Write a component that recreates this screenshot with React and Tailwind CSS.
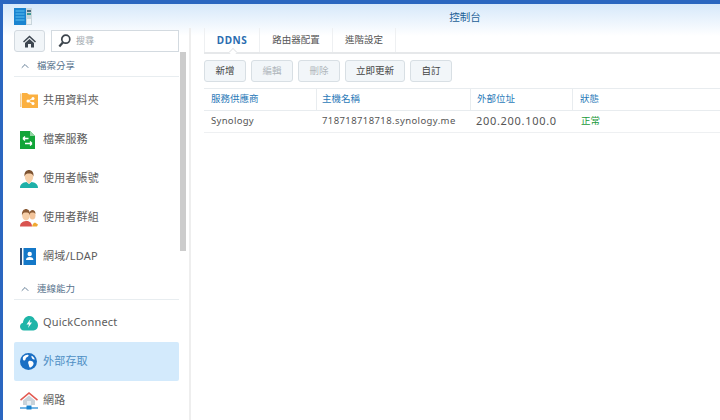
import { ChevronUp } from 'lucide-react'

const FONT = "font-['Noto_Sans','Noto_Sans_CJK_TC',sans-serif]"

function LogoIcon() {
  return (
    <svg width="19" height="17" viewBox="0 0 19 17">
      <rect x="0" y="0" width="12" height="17" fill="#1a84d0" />
      <path d="M1.5 3h9M1.5 6h9M1.5 9h9M1.5 12h9" stroke="#5cc0f0" strokeWidth="1" />
      <rect x="12" y="0" width="6" height="17" fill="#c9d6dc" />
      <rect x="13" y="2" width="4" height="2" fill="#4c6c80" />
      <rect x="13" y="5" width="4" height="2" fill="#3f9a94" />
      <rect x="13" y="11" width="4" height="5" fill="#eef3f5" />
    </svg>
  )
}

function HomeIcon() {
  return (
    <svg width="13" height="13" viewBox="0 0 13 13">
      <path d="M6.5.5 0 6.6l1 1 5.5-5 5.5 5 1-1z" fill="#3d4650" />
      <path d="M2 8 6.500 3.900 11 8v4.500H8V9H5v3.500H2z" fill="#3d4650" />
    </svg>
  )
}

function SearchIcon() {
  return (
    <svg width="13" height="14" viewBox="0 0 13 14" fill="none">
      <circle cx="7.800" cy="5.200" r="4" stroke="#3c444c" strokeWidth="1.700" />
      <path d="M4.800 8.500 1.300 12.500" stroke="#3c444c" strokeWidth="2.200" />
    </svg>
  )
}

function FolderIcon() {
  return (
    <svg width="18" height="17" viewBox="0 0 18 17">
      <path d="M0 1.500h1.500V15H0z" fill="#f6cf94" />
      <path d="M2 1h5l2 1.500h9V16H2z" fill="#fbb040" />
      <circle cx="8" cy="9" r="1.500" fill="#fff" />
      <circle cx="13" cy="6.500" r="1.500" fill="#fff" />
      <circle cx="13" cy="11.500" r="1.500" fill="#fff" />
      <path d="M8 9l5-2.500M8 9l5 2.500" stroke="#fff" strokeWidth="1" />
    </svg>
  )
}

function FileIcon() {
  return (
    <svg width="15" height="18" viewBox="0 0 15 18">
      <path d="M0 0h10l5 5v13H0z" fill="#12a538" />
      <path d="M10 0v5h5z" fill="#8fd6a2" />
      <path d="M3 7.500h5.500M3 7.500l2-2M3 7.500l2 2M5 12.500h7M12 12.500l-2-2M12 12.500l-2 2" stroke="#fff" strokeWidth="1.400" fill="none" />
    </svg>
  )
}

function UserIcon() {
  return (
    <svg width="18" height="18" viewBox="0 0 18 18">
      <path d="M0 18c0-4 3-5.500 6.500-6l2.500 2 2.500-2c3.500.5 6.500 2 6.500 6z" fill="#1fb0a8" />
      <ellipse cx="9" cy="6.500" rx="4.200" ry="5.500" fill="#f6cfa8" />
      <path d="M4.500 6.500C4 2 6.500 0 9 0s5 2 4.500 6.500C13 4 11 3.500 9 3.500S5 4 4.500 6.500z" fill="#7c5230" />
      <path d="M6.500 11.500 9 14l2.500-2.500-1-1h-3z" fill="#f6cfa8" />
    </svg>
  )
}

function GroupIcon() {
  return (
    <svg width="18" height="18" viewBox="0 0 18 18">
      <ellipse cx="12.500" cy="6.500" rx="3" ry="4" fill="#f3c49a" />
      <path d="M9.500 5c0-3 1.500-4 3-4s3 1 3 4c-1-1.500-2-1.500-3-1.500S10.500 3.500 9.500 5z" fill="#8a5a34" />
      <path d="M0 17.500c0-3.500 2.500-5 6-5.500s6 2 6 5.500z" fill="#d9534f" />
      <ellipse cx="6" cy="6.500" rx="3.800" ry="5" fill="#f6cfa8" />
      <path d="M2 6.500C1.500 2 4 0 6 0s4.500 2 4 6.500C9.500 4 8 3.500 6 3.500S2.500 4 2 6.500z" fill="#8a5a34" />
      <path d="M12 17.500c.5-2.500 1.500-3.500 3-4l3 2-1 2z" fill="#f0a830" />
    </svg>
  )
}

function DomainIcon() {
  return (
    <svg width="16" height="17" viewBox="0 0 16 17">
      <rect x="0" y="0" width="2" height="17" fill="#2f4f78" />
      <rect x="3.500" y="0" width="12.500" height="17" fill="#1478c8" />
      <circle cx="9.700" cy="6" r="2.200" fill="#fff" />
      <path d="M6 12c0-2 1.500-3 3.700-3s3.700 1 3.700 3z" fill="#fff" />
    </svg>
  )
}

function CloudIcon() {
  return (
    <svg width="18" height="16" viewBox="0 0 18 16">
      <path d="M4 15.500C1.500 15.500 0 13.800 0 11.500 0 9.500 1.300 8 3 7.700 3.300 3.500 6.300 1 9.300 1c2.700 0 4.700 1.500 5.500 4 1.900.6 3.200 2.800 3.200 5.300 0 3-2 5.200-4.500 5.200z" fill="#1fb5a8" />
      <path d="M10.500 4 6.500 9.500h2.500L8 13l4-5.500H9.500z" fill="#fff" />
    </svg>
  )
}

function GlobeIcon() {
  return (
    <svg width="17" height="17" viewBox="0 0 17 17">
      <circle cx="8.500" cy="8.500" r="8.500" fill="#1a6fc4" />
      <path d="M3 4c2-2 4-2.500 5.500-2 .5 1-1 2-2 2.500S6 7 4.500 7.500 2.500 6 3 4zM9 8c2-.5 4 .5 4.500 2s-1.500 4-3 4.500S9 12 8.500 11 8 8.500 9 8zM11.500 2.800c1.500.5 3 2 3.200 3.700-1 .2-2-.2-2.500-1s-1-1.700-.7-2.700z" fill="#fff" />
    </svg>
  )
}

function NetworkIcon() {
  return (
    <svg width="18" height="18" viewBox="0 0 18 18">
      <path d="M9 0 0 7.500l1 1.200L9 2l8 6.700 1-1.200z" fill="#e25a52" />
      <path d="M3 8.500 9 3.500l6 5V13H3z" fill="#c9d3da" />
      <rect x="7" y="9" width="4" height="4" fill="#e8eef2" />
      <path d="M0 16h18" stroke="#1a84d0" strokeWidth="1.200" />
      <rect x="6.500" y="13.500" width="5" height="4" fill="#1a84d0" />
    </svg>
  )
}

const FILE_ITEMS = [
  { label: '共用資料夾', Icon: FolderIcon },
  { label: '檔案服務', Icon: FileIcon },
  { label: '使用者帳號', Icon: UserIcon },
  { label: '使用者群組', Icon: GroupIcon },
  { label: '網域/LDAP', Icon: DomainIcon },
]

const CONNECT_ITEMS = [
  { label: 'QuickConnect', Icon: CloudIcon },
  { label: '外部存取', Icon: GlobeIcon, active: true },
  { label: '網路', Icon: NetworkIcon },
]

const BUTTONS = [
  { label: '新增', width: 'w-[42px]' },
  { label: '編輯', width: 'w-[42px]', disabled: true },
  { label: '刪除', width: 'w-[42px]', disabled: true },
  { label: '立即更新', width: 'w-[60px]' },
  { label: '自訂', width: 'w-[42px]' },
]

function SectionHead({ label, className }) {
  return (
    <div className={`flex items-center gap-[6px] border-b border-[#e8edf0] pl-[5px] text-[9.500px] text-[#56728c] ${className}`}>
      <ChevronUp size={12} strokeWidth={1.800} className="text-[#56728c]" />
      <span>{label}</span>
    </div>
  )
}

function NavItem({ label, Icon, active }) {
  return (
    <div className={`flex h-[39px] items-center rounded-[2px] pl-[6px] ${active ? 'bg-[#d3eafc] text-[#4f8fc4]' : 'text-[#5c5c5c]'}`}>
      <div className="flex w-[23px] items-center">
        <Icon />
      </div>
      <span className="text-[11px] tracking-[0.200px]">{label}</span>
    </div>
  )
}

export default function App() {
  return (
    <div className={`${FONT} flex h-[420px] w-[720px] flex-col overflow-hidden border-t-4 border-l-[3px] border-[#2a66c0] bg-[linear-gradient(#d6e8fa,#ffffff_32px)]`}>
      <div className="flex h-[24px] shrink-0 items-center">
        <div className="ml-[11px] mt-[1px] w-[176px]">
          <LogoIcon />
        </div>
        <div className="flex-1 pl-[20px] pt-[4px] text-center text-[10.500px] text-[#1d5f96]">控制台</div>
      </div>

      <div className="flex min-h-0 flex-1">
        {/* Sidebar */}
        <div className="relative w-[188px] shrink-0 border-r-[2px] border-[#eeeeee] pl-[11px] pt-[2px]">
          <div className="flex w-[165px] gap-[6px]">
            <div className="flex h-[22px] w-[31px] items-center justify-center rounded-[3px] border border-[#d3dae0] bg-[#f1f5f8]">
              <HomeIcon />
            </div>
            <div className="flex h-[22px] flex-1 items-center gap-[5px] border border-[#d3dae0] bg-white pl-[6px] text-[9px] text-[#a0a8ae]">
              <SearchIcon />
              <span>搜尋</span>
            </div>
          </div>
          <div className="w-[165px]">
            <SectionHead label="檔案分享" className="mb-[4px] h-[25px] pt-[4px]" />
            {FILE_ITEMS.map((item) => <NavItem key={item.label} {...item} />)}
            <SectionHead label="連線能力" className="h-[24px] pt-[3px]" />
            <div className="mt-[3px]">
              {CONNECT_ITEMS.map((item) => <NavItem key={item.label} {...item} />)}
            </div>
          </div>
          <div className="absolute left-[177px] top-[24px] h-[199px] w-[6px] bg-[#cccccc]" />
        </div>

        {/* Main */}
        <div className="min-w-0 flex-1 pl-[13px]">
          <div className="flex h-[26px] border-b-[2px] border-[#e6e8ea]">
            <div className="relative flex h-full w-[56px] items-center justify-center border-x border-[#eef0f2] pt-[1px] text-[10px] font-bold tracking-[0.500px] text-[#2a6db0]">
              DDNS
              <div className="absolute bottom-[-3px] left-[25px] h-[6px] w-[6px] rotate-45 border-l border-t border-[#e6e8ea] bg-white" />
            </div>
            <div className="flex h-full w-[73px] items-center justify-center border-r border-[#eef0f2] pt-[1px] text-[9.500px] text-[#555]">路由器配置</div>
            <div className="flex h-full w-[63px] items-center justify-center border-r border-[#eef0f2] pt-[1px] text-[9.500px] text-[#555]">進階設定</div>
          </div>

          <div className="flex gap-[5px] pt-[6px]">
            {BUTTONS.map((b) => (
              <div
                key={b.label}
                className={`flex h-[22px] items-center justify-center rounded-[3px] border border-[#d8dfe4] bg-[#f2f6f9] text-[9.500px] ${b.width} ${b.disabled ? 'text-[#b0b6bc]' : 'text-[#444]'}`}
              >
                {b.label}
              </div>
            ))}
          </div>

          <div className="mt-[6px] grid grid-cols-[113px_154px_102px_1fr] border-t border-[#e8ecef]">
            <div className="flex h-[22px] items-center border-b border-r border-[#e8ecef] pl-[7px] text-[9.500px] text-[#2b7ab8]">服務供應商</div>
            <div className="flex h-[22px] items-center border-b border-r border-[#e8ecef] pl-[5px] text-[9.500px] text-[#2b7ab8]">主機名稱</div>
            <div className="flex h-[22px] items-center border-b border-r border-[#e8ecef] pl-[6px] text-[9.500px] text-[#2b7ab8]">外部位址</div>
            <div className="flex h-[22px] items-center border-b border-[#e8ecef] pl-[7px] text-[9.500px] text-[#2b7ab8]">狀態</div>
            <div className="flex h-[22px] items-center border-b border-[#eef0f2] pl-[7px] text-[9.500px] tracking-[0.300px] text-[#555]">Synology</div>
            <div className="flex h-[22px] items-center border-b border-[#eef0f2] pl-[5px] text-[9.500px] tracking-[0.400px] text-[#555]">718718718718.synology.me</div>
            <div className="flex h-[22px] items-center border-b border-[#eef0f2] pl-[5px] text-[11px] tracking-[0.700px] text-[#555]">200.200.100.0</div>
            <div className="flex h-[22px] items-center border-b border-[#eef0f2] pl-[8px] text-[9.500px] text-[#1a9a3c]">正常</div>
          </div>
        </div>
      </div>
    </div>
  )
}
